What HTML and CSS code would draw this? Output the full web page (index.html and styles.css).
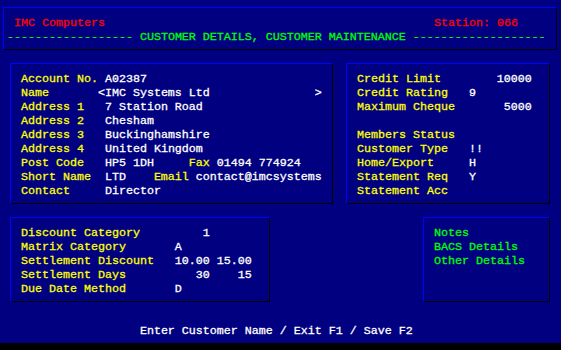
FILE: index.html
```html
<!DOCTYPE html>
<html lang="en">
<head>
  <meta charset="UTF-8" />
  <title>IMC Computers - Customer Maintenance</title>
  <link rel="stylesheet" href="styles.css">
</head>
<body>
  <div class="screen">
    <!-- Title bar -->
    <div class="box header">
      <div class="line red">
        <span>IMC Computers</span>
        <span class="station">Station: 066</span>
      </div>
      <div class="line dashes">------------------ CUSTOMER DETAILS, CUSTOMER MAINTENANCE -------------------</div>
    </div>

    <div class="row">
      <!-- Account details -->
      <div class="box account">
        <div class="line"><span class="label w12">Account No.</span>A02387</div>
        <div class="line"><span class="label w11">Name</span>&lt;IMC Systems Ltd               &gt;</div>
        <div class="line"><span class="label w12">Address 1</span>7 Station Road</div>
        <div class="line"><span class="label w12">Address 2</span>Chesham</div>
        <div class="line"><span class="label w12">Address 3</span>Buckinghamshire</div>
        <div class="line"><span class="label w12">Address 4</span>United Kingdom</div>
        <div class="line"><span class="label w12">Post Code</span><span class="w12">HP5 1DH</span><span class="label w4">Fax</span>01494 774924</div>
        <div class="line"><span class="label w12">Short Name</span><span class="w7">LTD</span><span class="label w6">Email</span>contact@imcsystems</div>
        <div class="line"><span class="label w12">Contact</span>Director</div>
      </div>

      <!-- Credit details -->
      <div class="box credit">
        <div class="line"><span class="label w16">Credit Limit</span><span class="num w9">10000</span></div>
        <div class="line"><span class="label w16">Credit Rating</span>9</div>
        <div class="line"><span class="label w16">Maximum Cheque</span><span class="num w9">5000</span></div>
        <div class="line"></div>
        <div class="line"><span class="label">Members Status</span></div>
        <div class="line"><span class="label w16">Customer Type</span>!!</div>
        <div class="line"><span class="label w16">Home/Export</span>H</div>
        <div class="line"><span class="label w16">Statement Req</span>Y</div>
        <div class="line"><span class="label">Statement Acc</span></div>
      </div>
    </div>

    <div class="row">
      <!-- Discount terms -->
      <div class="box discount">
        <div class="line"><span class="label w22">Discount Category</span><span class="num w5">1</span></div>
        <div class="line"><span class="label w22">Matrix Category</span>A</div>
        <div class="line"><span class="label w22">Settlement Discount</span><span class="num w5">10.00</span><span class="num w5 next">15.00</span></div>
        <div class="line"><span class="label w22">Settlement Days</span><span class="num w5">30</span><span class="num w5 next">15</span></div>
        <div class="line"><span class="label w22">Due Date Method</span>D</div>
      </div>

      <!-- Other screens -->
      <div class="box links">
        <div class="line green">Notes</div>
        <div class="line green">BACS Details</div>
        <div class="line green">Other Details</div>
      </div>
    </div>

    <div class="status">Enter Customer Name / Exit F1 / Save F2</div>
  </div>
  <div class="footer"></div>
</body>
</html>
```

FILE: styles.css
```css
/* 80 x 25 text screen, 7px x 14px cells */
* {
  box-sizing: border-box;
}

body {
  margin: 0;
  background: #000080;
  color: #ffffff;
  font-family: "Liberation Mono", "Courier New", monospace;
  font-size: 11.666px;
  line-height: 14px;
  /* thicken the strokes a little, closer to the bitmap font */
  -webkit-text-stroke: 0.3px currentColor;
}

.screen {
  width: 560px;
  height: 336px;
  background: #000080;
}

/* boxes sit on the middle of the character cells,
   text is dropped 2px to sit on the cell baseline */
.box {
  margin: 7px 3px 6px;
  padding: 8px 3px 5px;
  border: 1px solid;
  border-color: #0000ff #000000 #000000 #0000ff;
}

.header {
  width: 554px;
}

.row {
  display: flex;
  justify-content: space-between;
  padding: 0 7px;
}

.account { width: 323px; }
.credit { width: 204px; }
.discount { width: 260px; }
.links { width: 127px; }

.line {
  display: flex;
  height: 14px;
  padding-left: 1ch;
  white-space: pre;
}

.header .line.dashes {
  padding-left: 0;
  color: #00ff00;
}

.station {
  margin-left: auto;
  margin-right: 5ch;
}

.label { color: #ffff00; }
.red { color: #ff0000; }
.green { color: #00ff00; }
.num { text-align: right; }
.next { margin-left: 1ch; }

.w4 { width: 4ch; }
.w5 { width: 5ch; }
.w6 { width: 6ch; }
.w7 { width: 7ch; }
.w9 { width: 9ch; }
.w11 { width: 11ch; }
.w12 { width: 12ch; }
.w16 { width: 16ch; }
.w22 { width: 22ch; }

.status {
  margin-top: 16px;
  padding-left: 20ch;
  height: 12px;
  white-space: pre;
}

.footer {
  height: 14px;
  background: #000000;
}
```
